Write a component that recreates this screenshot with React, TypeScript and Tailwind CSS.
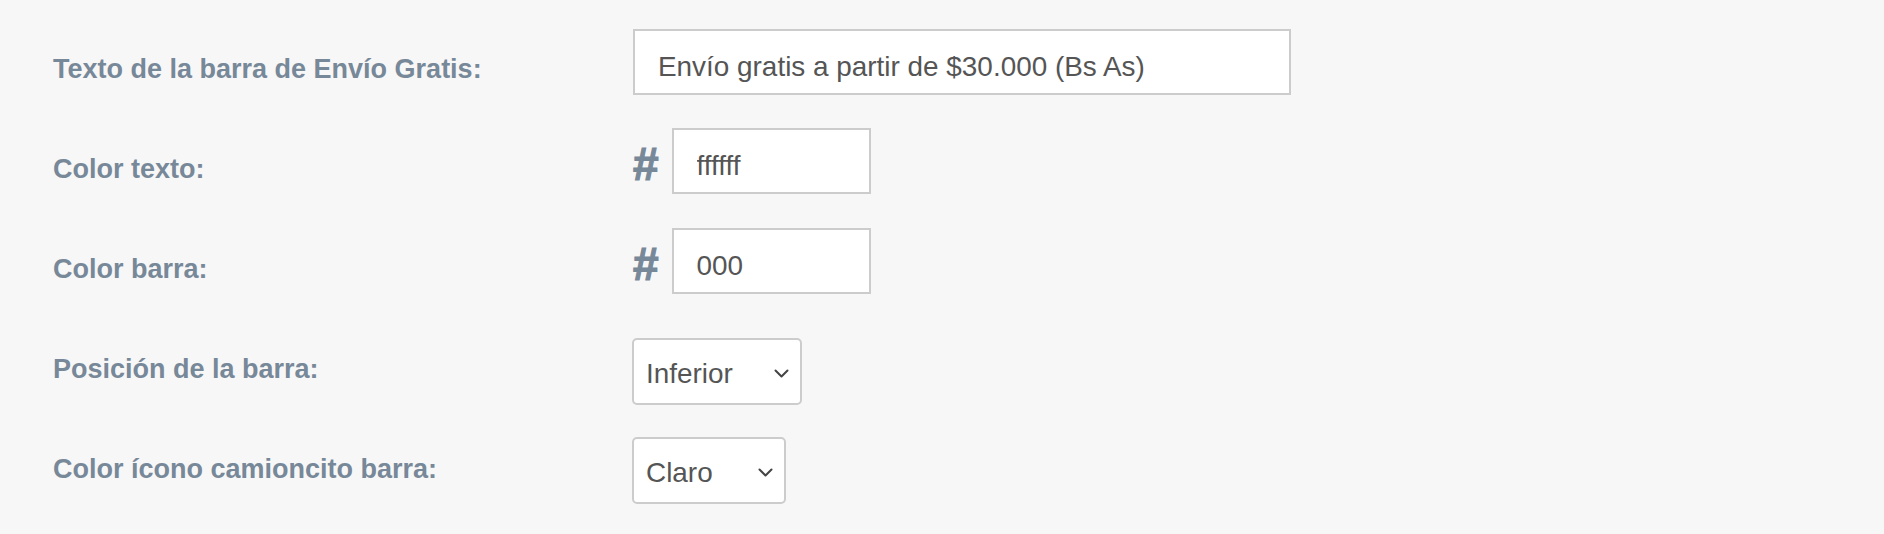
import { useState } from 'react'

const labelCls =
  "w-[580px] shrink-0 pt-[24px] text-[27px] leading-[32px] font-bold text-[#778899] font-['Liberation_Sans',Arial,sans-serif]"

const inputCls =
  "h-[66px] border-2 border-[#cccccc] bg-white pl-[23px] pr-3 pt-[9px] pb-0 text-[27.9px] text-[#555555] outline-none font-['Liberation_Sans',Arial,sans-serif]"

function Chevron() {
  return (
    <svg
      className="pointer-events-none absolute right-[13px] top-1/2 -translate-y-[3px]"
      width="15"
      height="9"
      viewBox="0 0 15 9"
      fill="none"
    >
      <path d="M1.5 1.5 L7.5 7.5 L13.5 1.5" stroke="#444444" strokeWidth="2" strokeLinecap="round" strokeLinejoin="round" />
    </svg>
  )
}

function HashInput({ value, onChange }: { value: string; onChange: (v: string) => void }) {
  return (
    <div className="flex items-center gap-[13px]">
      <span className="mt-[6px] text-[46px] leading-none font-bold text-[#778899] [-webkit-text-stroke:1.2px_#778899] font-['Liberation_Sans',Arial,sans-serif]">
        #
      </span>
      <input
        className={`${inputCls} w-[199px]`}
        value={value}
        onChange={(e) => onChange(e.target.value)}
      />
    </div>
  )
}

function Select({
  value,
  options,
  width,
  onChange,
}: {
  value: string
  options: string[]
  width: string
  onChange: (v: string) => void
}) {
  return (
    <div className={`relative ${width}`}>
      <select
        className="h-[67px] w-full appearance-none rounded-[5px] border-2 border-[#cccccc] bg-white pl-[12px] pr-8 pt-[4px] pb-0 text-[27.9px] text-[#555555] outline-none font-['Liberation_Sans',Arial,sans-serif]"
        value={value}
        onChange={(e) => onChange(e.target.value)}
      >
        {options.map((o) => (
          <option key={o} value={o}>
            {o}
          </option>
        ))}
      </select>
      <Chevron />
    </div>
  )
}

export default function App() {
  const [texto, setTexto] = useState('Envío gratis a partir de $30.000 (Bs As)')
  const [colorTexto, setColorTexto] = useState('ffffff')
  const [colorBarra, setColorBarra] = useState('000')
  const [posicion, setPosicion] = useState('Inferior')
  const [icono, setIcono] = useState('Claro')

  return (
    <div className="min-h-[534px] w-full bg-[#f7f7f7] pt-[29px] pl-[53px]">
      {/* Texto barra */}
      <div className="flex h-[100px] items-start">
        <label className={labelCls}>Texto de la barra de Envío Gratis:</label>
        <input className={`${inputCls} w-[658px]`} value={texto} onChange={(e) => setTexto(e.target.value)} />
      </div>

      {/* Colores */}
      <div className="flex h-[100px] items-start">
        <label className={labelCls}>Color texto:</label>
        <div className="-mt-[1px]">
          <HashInput value={colorTexto} onChange={setColorTexto} />
        </div>
      </div>
      <div className="flex h-[100px] items-start">
        <label className={labelCls}>Color barra:</label>
        <div className="-mt-[1px]">
          <HashInput value={colorBarra} onChange={setColorBarra} />
        </div>
      </div>

      {/* Selects */}
      <div className="flex h-[100px] items-start">
        <label className={labelCls}>Posición de la barra:</label>
        <div className="mt-[9px] -ml-[1px]">
          <Select value={posicion} options={['Inferior', 'Superior']} width="w-[170px]" onChange={setPosicion} />
        </div>
      </div>
      <div className="flex h-[100px] items-start">
        <label className={labelCls}>Color ícono camioncito barra:</label>
        <div className="mt-[8px] -ml-[1px]">
          <Select value={icono} options={['Claro', 'Oscuro']} width="w-[154px]" onChange={setIcono} />
        </div>
      </div>
    </div>
  )
}
